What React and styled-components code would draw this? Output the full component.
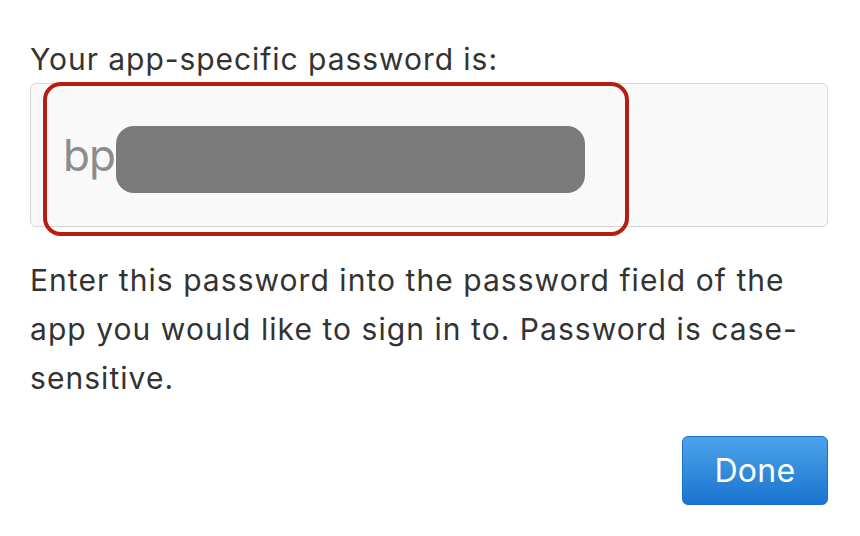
import React from "react";
import styled, { createGlobalStyle } from "styled-components";

const Global = createGlobalStyle`
  html, body { margin: 0; padding: 0; background: #ffffff; }
  body { font-family: Inter, "Liberation Sans", Arial, sans-serif; color: #333333; }
`;

const Page = styled.div`
  width: 860px;
  height: 536px;
  box-sizing: border-box;
  padding: 40px 32px 0 30px;
  display: flex;
  flex-direction: column;
`;

const Label = styled.div`
  font-size: 30px;
  line-height: 38px;
  color: #333333;
  letter-spacing: 0.95px;
`;

const Field = styled.div`
  position: relative;
  margin-top: 5px;
  height: 144px;
  box-sizing: border-box;
  border: 1px solid #d7d7d7;
  border-radius: 6px;
  background: #f9f9f9;
  display: flex;
  align-items: center;
  padding: 0 0 0 32px;
`;

const Highlight = styled.div`
  position: absolute;
  left: 12px;
  top: -2px;
  width: 586px;
  height: 154px;
  box-sizing: border-box;
  border: 4.5px solid #b51c12;
  border-radius: 18px;
  pointer-events: none;
`;

const Prefix = styled.span`
  font-size: 44px;
  line-height: 1;
  color: #8c8c8c;
  letter-spacing: -1px;
`;

const Redaction = styled.span`
  display: block;
  width: 469px;
  height: 67px;
  margin-left: 1px;
  margin-top: 8px;
  border-radius: 18px;
  background: #7b7b7b;
`;

const Note = styled.p`
  margin: 29px 0 0 0;
  font-size: 30px;
  line-height: 49px;
  letter-spacing: 1.05px;
  color: #333333;
`;

const Actions = styled.div`
  display: flex;
  justify-content: flex-end;
  margin-top: 33px;
`;

const DoneButton = styled.button`
  width: 146px;
  height: 69px;
  border: 1px solid #1a70c8;
  border-radius: 6px;
  background: linear-gradient(#4da3ea, #1a74cf);
  color: #ffffff;
  font-family: Inter, "Liberation Sans", Arial, sans-serif;
  font-size: 32px;
  letter-spacing: 0.3px;
  padding: 0;
  cursor: pointer;
`;

export default function App() {
  return (
    <>
      <Global />
      <Page>
        <Label>Your app-specific password is:</Label>
        <Field>
          <Prefix>bp</Prefix>
          <Redaction />
          <Highlight />
        </Field>
        <Note>
          Enter this password into the password field of the app you would like to sign in to. Password is case-sensitive.
        </Note>
        <Actions>
          <DoneButton>Done</DoneButton>
        </Actions>
      </Page>
    </>
  );
}
